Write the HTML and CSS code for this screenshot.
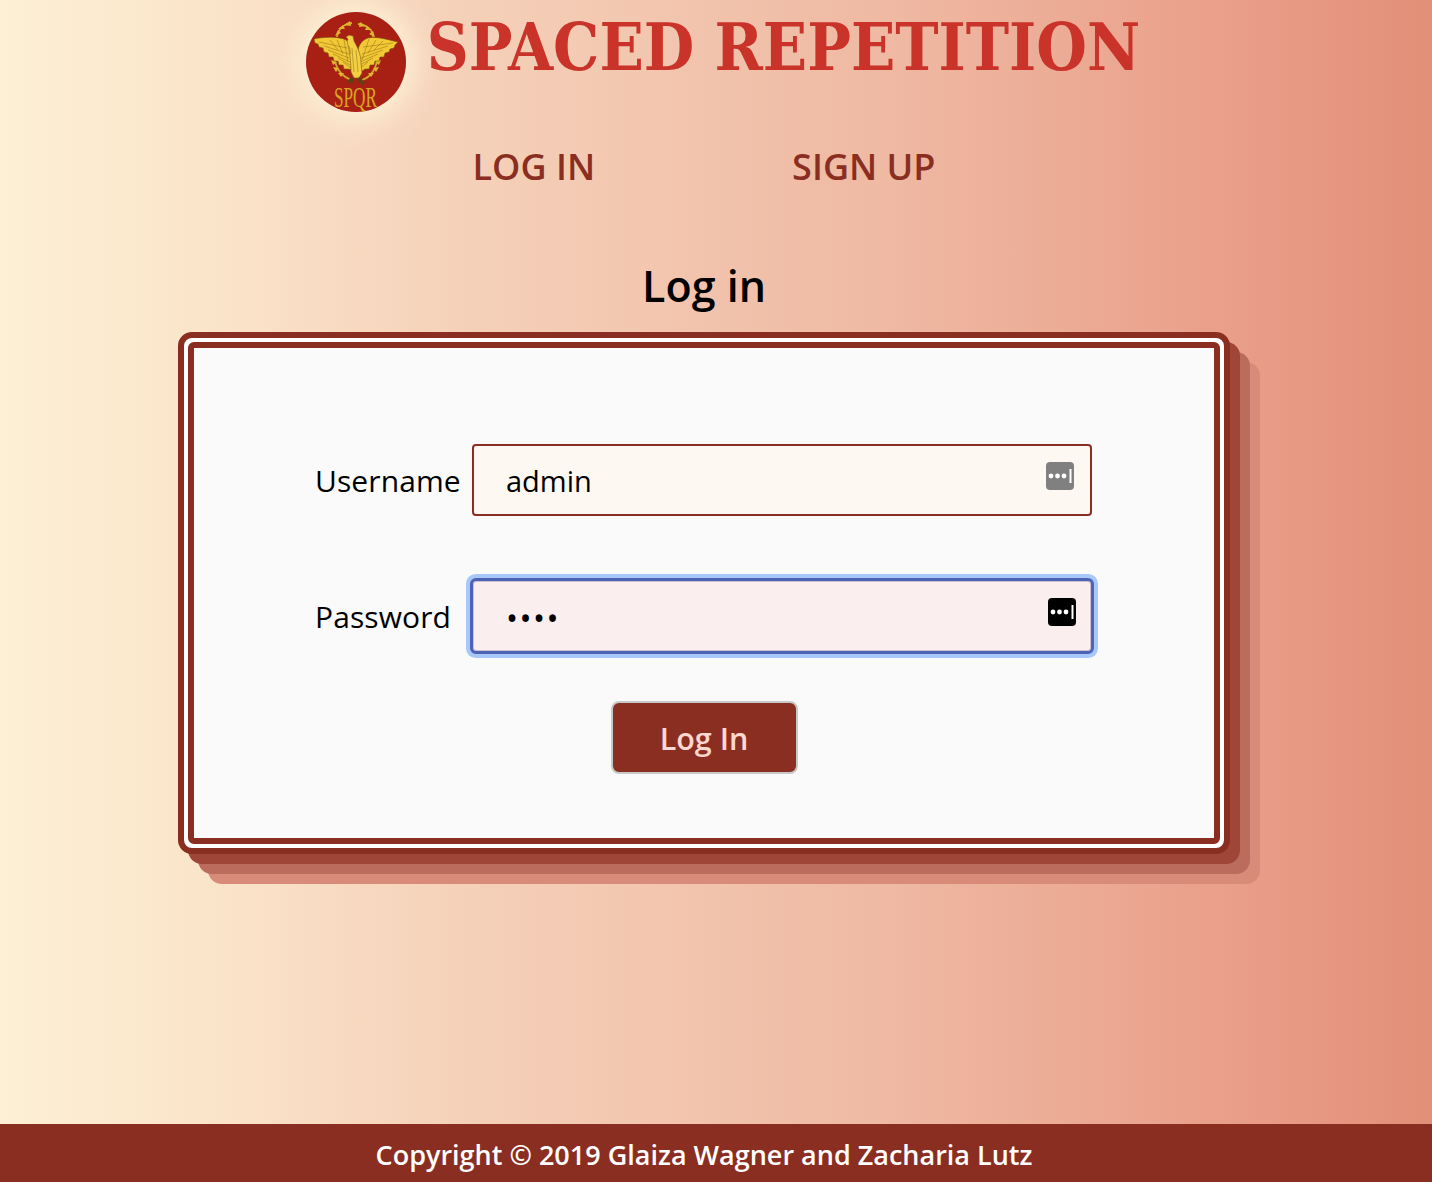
FILE: index.html
```html
<!DOCTYPE html>
<html lang="en">
<head>
<meta charset="utf-8">
<title>Spaced Repetition</title>
<link rel="stylesheet" href="styles.css">
</head>
<body>
<div class="page">
  <header class="masthead">
    <svg class="logo" viewBox="0 0 100 100" aria-label="SPQR eagle">
      <circle cx="50" cy="50" r="50" fill="#a81f14"/>
      <g fill="none" stroke="#d3a92a" stroke-width="1.800">
        <path d="M46 11c-8 1-14 6-15 14"/>
        <path d="M52 12c8 1 15 5 15 13"/>
        <path d="M29 46c0 10 7 19 17 22"/>
        <path d="M71 46c0 10-6 19-15 22"/>
      </g>
      <path d="M44 9l-6 4 7 1zM37 13l-5 4 7 0zM32 18l-3 6 6-3zM54 10l6 4-7 1zM61 14l5 4-7 0zM67 19l2 6-6-3zM25 48l6 2-4 3zM27 55l6 1-3 4zM32 61l6 0-3 4zM75 48l-6 2 4 3zM73 55l-6 1 3 4zM68 61l-6 0 3 4z" fill="#e0b52c"/>
      <path d="M8 27c9-2 24-3 32 1 4 3 5 10 6 17l1 13-5-1-4 0-1-4-4 0-1-4-4 0-1-4-4 0-1-4-4-1-1-4-4-1-1-3-3-1z" fill="#f2c935" stroke="#7a5a10" stroke-width=".6"/>
      <path d="M92 30c-9-2-21-6-30-4-6 2-9 7-10 12l3 22 4-3 4 0 1-4 4 0 1-4 4 0 1-4 4 0 1-4 4-1 1-3 4-1 1-3z" fill="#f2c935" stroke="#7a5a10" stroke-width=".6"/>
      <path d="M13 30l28 6M18 34l25 8M22 38l21 8M27 42l17 8M32 46l12 7M37 50l8 6M38 28l4 22M31 28l6 14M24 28l8 10M87 31l-30 4M82 34l-26 8M77 38l-22 8M72 42l-18 8M67 46l-13 7M62 50l-8 6M63 27l-7 21M70 28l-8 13M77 29l-9 9" stroke="#8a6a14" stroke-width=".5" fill="none"/>
      <path d="M40 25l3-2 4 1 1 5c4 7 7 14 7 22l1 10-3 5h-5l-3-6c0-8-1-16-2-22-1-4-1-7-2-9l1-2z" fill="#f3cf43" stroke="#7a5a10" stroke-width=".6"/>
      <path d="M46 36l2 24M50 38l2 22M43 34l2 8" stroke="#8a6a14" stroke-width=".5" fill="none"/>
      <path d="M45 65l-4 5 2 2 2-2 2 1 1-5zM54 65l5 6-2 2-2-2-2 1-1-6z" fill="#5e4212"/>
      <text class="logo-text" x="28" y="95" textLength="43" lengthAdjust="spacingAndGlyphs">SPQR</text>
    </svg>
    <h1 class="title">SPACED REPETITION</h1>
  </header>
  <nav class="nav">
    <a class="nav-link" href="#">LOG IN</a>
    <a class="nav-link" href="#">SIGN UP</a>
  </nav>
  <main class="main">
    <h2 class="heading">Log in</h2>
    <form class="card">
      <div class="card-inner">
        <div class="row">
          <label class="label" for="u">Username</label>
          <div class="field">
            <input class="input input-filled" id="u" type="text" value="admin" readonly>
            <svg class="key" viewBox="0 0 28 28"><rect width="28" height="28" rx="4" fill="#808080"/><circle cx="5" cy="14" r="2.400" fill="#fff"/><circle cx="11.500" cy="14" r="2.400" fill="#fff"/><circle cx="18" cy="14" r="2.400" fill="#fff"/><rect x="23.500" y="7" width="2" height="14" fill="#fff"/></svg>
          </div>
        </div>
        <div class="row">
          <label class="label" for="p">Password</label>
          <div class="field">
            <input class="input input-focus" id="p" type="password" value="abcd" readonly>
            <svg class="key key-focus" viewBox="0 0 28 28"><rect width="28" height="28" rx="4" fill="#000"/><circle cx="5" cy="14" r="2.400" fill="#fff"/><circle cx="11.500" cy="14" r="2.400" fill="#fff"/><circle cx="18" cy="14" r="2.400" fill="#fff"/><rect x="23.500" y="7" width="2" height="14" fill="#fff"/></svg>
          </div>
        </div>
        <button class="button" type="button">Log In</button>
      </div>
    </form>
  </main>
</div>
<footer class="footer">Copyright © 2019 Glaiza Wagner and Zacharia Lutz</footer>
</body>
</html>
```
FILE: styles.css
```css
* { box-sizing: border-box; }
html, body { margin: 0; height: 100%; }
body {
  min-height: 1182px;
  display: flex;
  flex-direction: column;
  font-family: "Open Sans", "Noto Sans", sans-serif;
  background: linear-gradient(90deg, #fdf0d5 0%, #fae3c9 16%, #f5d0b8 33%, #efb9a3 62%, #e89a85 90%, #e28f77 100%);
}
.page { flex: 1; padding-right: 24px; }
.masthead {
  display: flex;
  justify-content: center;
  align-items: flex-start;
  gap: 21px;
  padding: 12px 0 0 38px;
}
.logo {
  width: 100px;
  height: 100px;
  flex: none;
  overflow: visible;
  border-radius: 50%;
  box-shadow: 0 0 30px 10px #fdf0d5;
}
.logo-text { font: 30px "Liberation Serif", serif; fill: #d9a520; }
.title {
  margin: 0;
  font: 700 64.7px/70px "DejaVu Serif Condensed", "DejaVu Serif", serif;
  color: #c9332a;
  white-space: nowrap;
}
.nav {
  display: flex;
  justify-content: center;
  gap: 197px;
  margin-top: 13px;
}
.nav-link {
  font-size: 36px;
  line-height: 84px;
  font-weight: 600;
  color: #8a2e22;
  text-decoration: none;
}
.main { display: flex; flex-direction: column; align-items: center; }
.heading {
  margin: 49px 0 18px;
  font-size: 43px;
  line-height: 56px;
  font-weight: 600;
  color: #000;
}
.card {
  width: 1052px;
  height: 522px;
  padding: 4px;
  border: 6px solid #8a2e22;
  border-radius: 14px;
  background: #fff;
  box-shadow: 10px 10px 0 #9f4638, 20px 20px 0 #bb6c5c, 30px 30px 0 #d88b78;
}
.card-inner {
  height: 100%;
  display: flex;
  flex-direction: column;
  align-items: center;
  gap: 64px;
  padding-top: 96px;
  border: 6px solid #8a2e22;
  border-radius: 6px;
  background: #fafafa;
}
.row { display: flex; align-items: center; width: 778px; padding-right: 1px; }
.label { width: 157px; font-size: 30px; letter-spacing: .1px; color: #000; }
.field { position: relative; width: 620px; }
.input {
  display: block;
  width: 100%;
  height: 72px;
  padding: 0 60px 0 32px;
  border-radius: 4px;
  font: 29px "Open Sans", "Noto Sans", sans-serif;
  color: #000;
  outline: none;
}
.input-filled { border: 2px solid #8a2e22; background: #fdf9f2; }
.input-focus {
  padding-top: 3px;
  border: 2px solid #cbbfd0;
  background: #faeeee;
  outline: 3px solid #4c63b6;
  outline-offset: -1px;
  box-shadow: 0 0 0 6px #a8c8fa;
  font-size: 32px;
  letter-spacing: 1.5px;
}
.key { position: absolute; top: 18px; right: 18px; width: 28px; height: 28px; }
.key-focus { right: 16px; }
.button {
  width: 187px;
  height: 73px;
  margin-top: -15px;
  border: 2px solid #c8c8c8;
  border-radius: 8px;
  background: #8a2e22;
  color: #fcd6d0;
  font: 600 30.5px "Open Sans", "Noto Sans", sans-serif;
}
.footer {
  height: 58px;
  padding-right: 24px;
  background: #8a2e22;
  color: #fff;
  font-size: 27px;
  font-weight: 600;
  line-height: 62px;
  text-align: center;
}
```
